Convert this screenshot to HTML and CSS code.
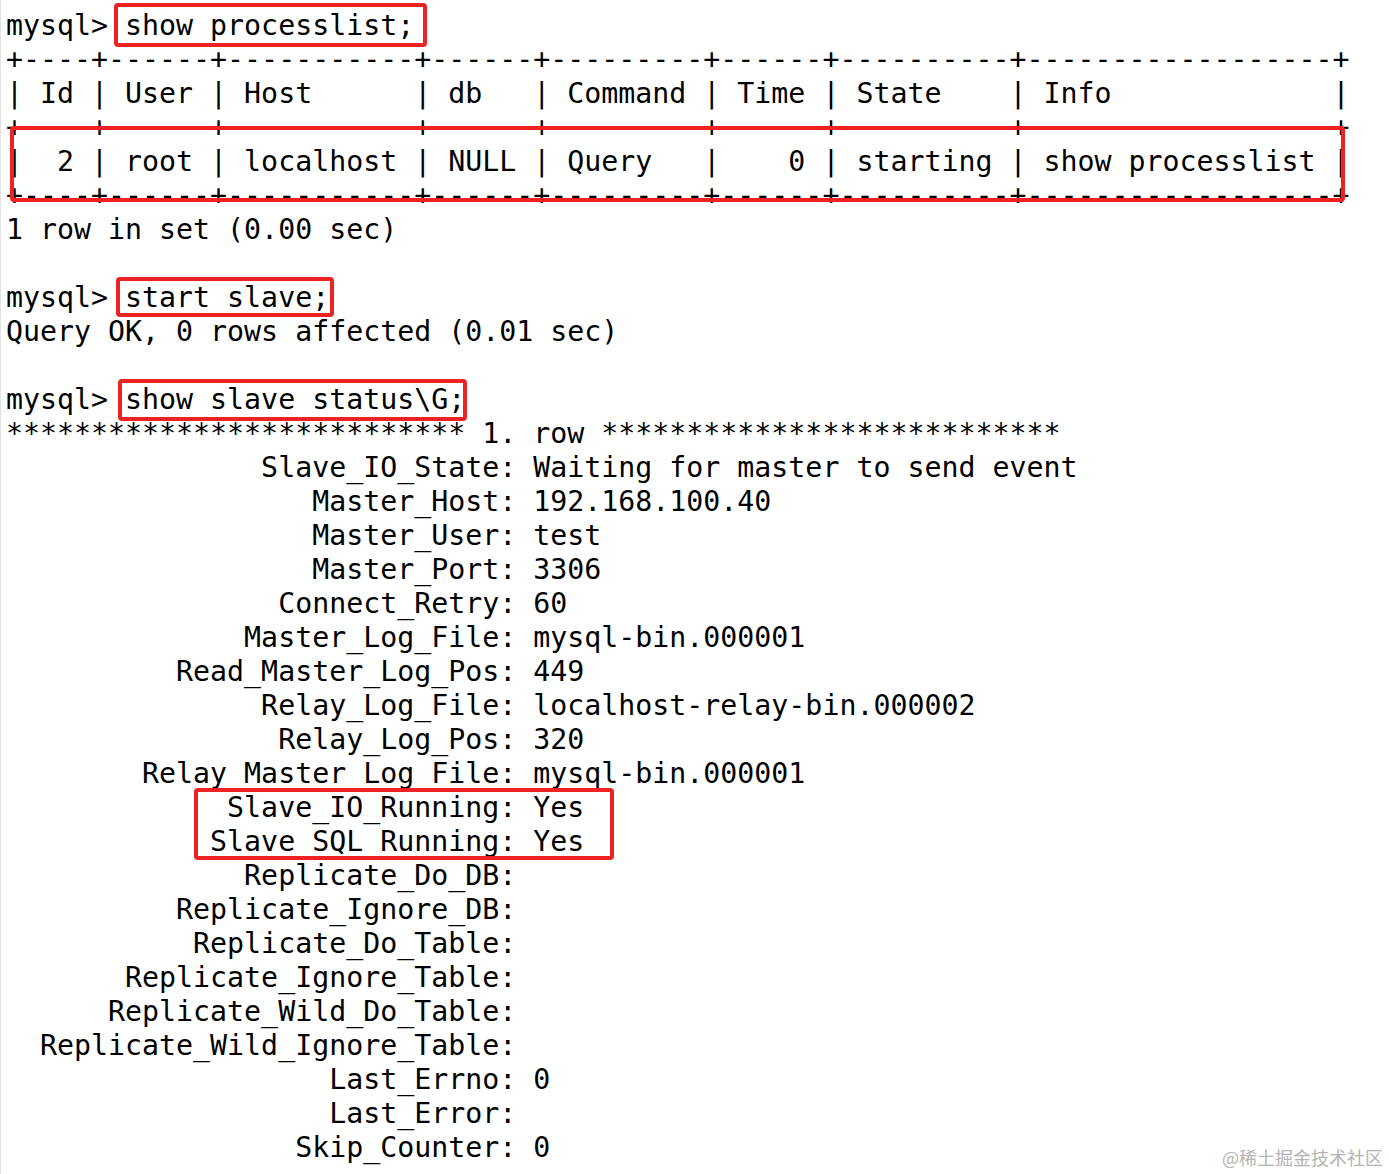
FILE: index.html
```html
<!DOCTYPE html>
<html lang="en">
<head>
<meta charset="utf-8">
<title>mysql</title>
<link rel="stylesheet" href="styles.css">
</head>
<body>
<div class="screen">
<pre class="term">mysql&gt; show processlist;
+----+------+-----------+------+---------+------+----------+------------------+
| Id | User | Host      | db   | Command | Time | State    | Info             |
+----+------+-----------+------+---------+------+----------+------------------+
|  2 | root | localhost | NULL | Query   |    0 | starting | show processlist |
+----+------+-----------+------+---------+------+----------+------------------+
1 row in set (0.00 sec)

mysql&gt; start slave;
Query OK, 0 rows affected (0.01 sec)

mysql&gt; show slave status\G;
*************************** 1. row ***************************
               Slave_IO_State: Waiting for master to send event
                  Master_Host: 192.168.100.40
                  Master_User: test
                  Master_Port: 3306
                Connect_Retry: 60
              Master_Log_File: mysql-bin.000001
          Read_Master_Log_Pos: 449
               Relay_Log_File: localhost-relay-bin.000002
                Relay_Log_Pos: 320
        Relay_Master_Log_File: mysql-bin.000001
             Slave_IO_Running: Yes
            Slave_SQL_Running: Yes
              Replicate_Do_DB: 
          Replicate_Ignore_DB: 
           Replicate_Do_Table: 
       Replicate_Ignore_Table: 
      Replicate_Wild_Do_Table: 
  Replicate_Wild_Ignore_Table: 
                   Last_Errno: 0
                   Last_Error: 
                 Skip_Counter: 0</pre>
<div class="mark mark-1"></div>
<div class="mark mark-2"></div>
<div class="mark mark-3"></div>
<div class="mark mark-4"></div>
<div class="mark mark-5"></div>
<div class="watermark">@稀土掘金技术社区</div>
</div>
</body>
</html>
```
FILE: styles.css
```css
html, body {
  margin: 0;
  padding: 0;
  background: #ffffff;
}

.screen {
  position: relative;
  width: 1389px;
  height: 1174px;
  overflow: hidden;
  border-left: 1px solid #e2e2e2;
  box-sizing: border-box;
}

.term {
  margin: 0;
  padding: 9px 0 0 5px;
  font-family: "DejaVu Sans Mono", monospace;
  font-size: 28.25px;
  line-height: 34px;
  color: #000;
  white-space: pre;
}

.mark {
  position: absolute;
  border: 4px solid #ee2222;
  border-radius: 4px;
  box-sizing: border-box;
}

.mark-1 { left: 113px; top: 3px;   width: 313px;  height: 44px; }
.mark-2 { left: 9px;   top: 126px; width: 1335px; height: 76px; }
.mark-3 { left: 115px; top: 277px; width: 218px;  height: 40px; }
.mark-4 { left: 117px; top: 379px; width: 349px;  height: 42px; }
.mark-5 { left: 193px; top: 788px; width: 420px;  height: 72px; }

.watermark {
  position: absolute;
  right: 6px;
  bottom: 4px;
  font-family: "Noto Sans CJK SC", sans-serif;
  font-size: 18px;
  line-height: 26px;
  color: #b4b4b4;
}
```
